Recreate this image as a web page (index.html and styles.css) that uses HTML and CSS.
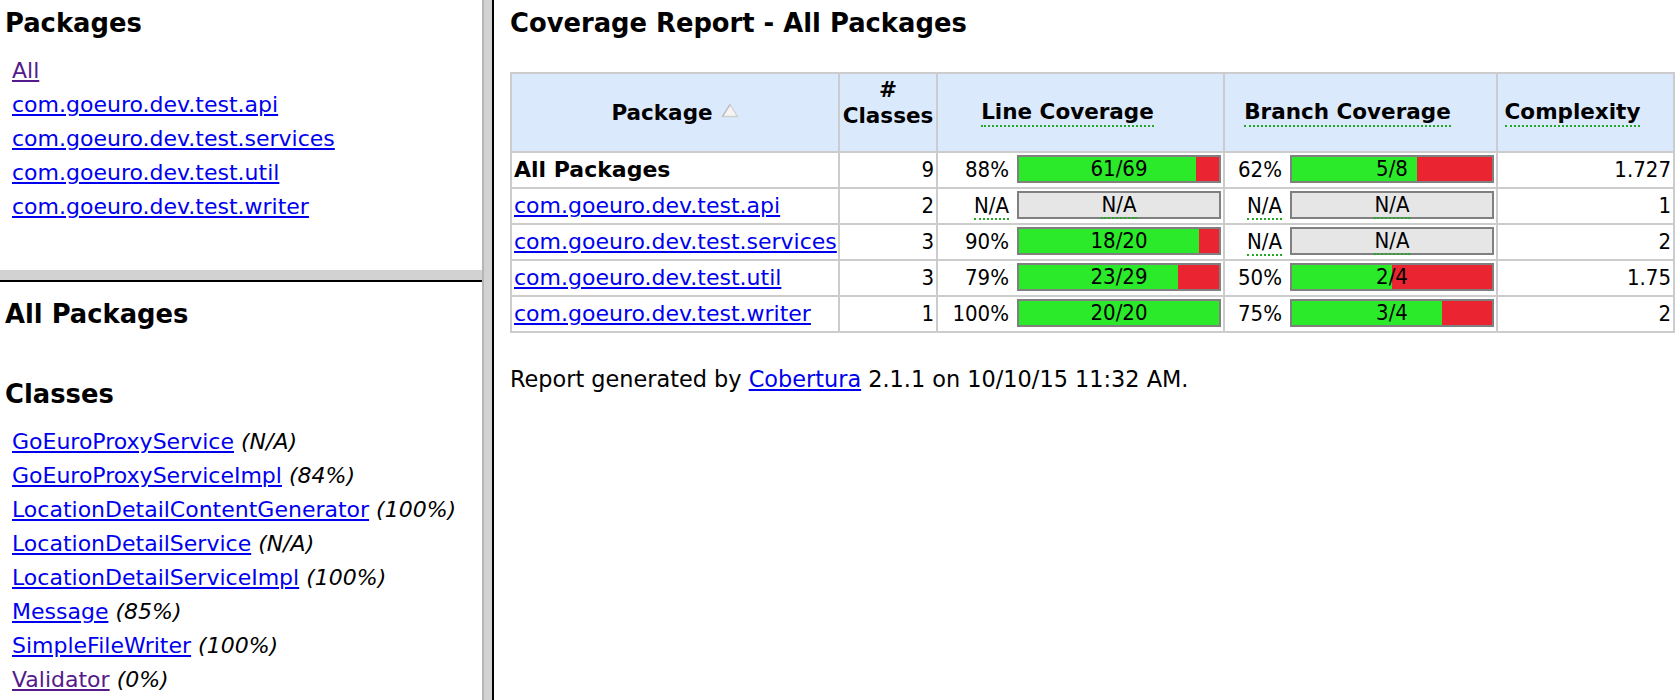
FILE: index.html
```html
<!DOCTYPE html>
<html lang="en">
<head>
<meta charset="utf-8">
<title>Coverage Report - All Packages</title>
<link rel="stylesheet" href="styles.css">
</head>
<body>
<div class="frames">
  <aside class="nav">
    <section class="nav-top">
      <h2 class="nav-title">Packages</h2>
      <ul class="nav-list">
        <li><a class="visited" href="#">All</a></li>
        <li><a href="#">com.goeuro.dev.test.api</a></li>
        <li><a href="#">com.goeuro.dev.test.services</a></li>
        <li><a href="#">com.goeuro.dev.test.util</a></li>
        <li><a href="#">com.goeuro.dev.test.writer</a></li>
      </ul>
    </section>
    <div class="hsplit"></div>
    <section class="nav-bottom">
      <h2 class="nav-title">All Packages</h2>
      <h2 class="nav-title classes-title">Classes</h2>
      <ul class="nav-list">
        <li><a href="#">GoEuroProxyService</a> <i>(N/A)</i></li>
        <li><a href="#">GoEuroProxyServiceImpl</a> <i>(84%)</i></li>
        <li><a href="#">LocationDetailContentGenerator</a> <i>(100%)</i></li>
        <li><a href="#">LocationDetailService</a> <i>(N/A)</i></li>
        <li><a href="#">LocationDetailServiceImpl</a> <i>(100%)</i></li>
        <li><a href="#">Message</a> <i>(85%)</i></li>
        <li><a href="#">SimpleFileWriter</a> <i>(100%)</i></li>
        <li><a class="visited" href="#">Validator</a> <i>(0%)</i></li>
      </ul>
    </section>
  </aside>
  <div class="vsplit"></div>
  <main class="main">
    <h1 class="page-title">Coverage Report - All Packages</h1>
    <table class="report">
      <colgroup>
        <col class="c-pkg"><col class="c-cls"><col class="c-line"><col class="c-branch"><col class="c-cx">
      </colgroup>
      <thead>
        <tr>
          <th><div class="th-in"><span>Package</span><svg class="sort" width="18" height="15" viewBox="0 0 18 15"><path d="M9 1.5 L16.5 13.5 L1.5 13.5 Z" fill="#f4f4f4" stroke="#cfcfcf" stroke-width="1.3"/><path d="M9 1.5 L1.5 13.5" stroke="#b9b9b9" stroke-width="1.3"/></svg></div></th>
          <th><div class="th-in th-stack"><span>#</span><span>Classes</span></div></th>
          <th><div class="th-in"><span class="hint">Line Coverage</span><svg class="sort off" width="18" height="15"></svg></div></th>
          <th><div class="th-in"><span class="hint">Branch Coverage</span><svg class="sort off" width="18" height="15"></svg></div></th>
          <th><div class="th-in"><span class="hint">Complexity</span><svg class="sort off" width="18" height="15"></svg></div></th>
        </tr>
      </thead>
      <tbody>
        <tr>
          <td class="pkg"><b>All Packages</b></td>
          <td class="num">9</td>
          <td><div class="cov"><span class="pct">88%</span><div class="bar" style="--g:88.4%">61/69</div></div></td>
          <td><div class="cov"><span class="pct">62%</span><div class="bar" style="--g:62.5%">5/8</div></div></td>
          <td class="num">1.727</td>
        </tr>
        <tr>
          <td class="pkg"><a href="#">com.goeuro.dev.test.api</a></td>
          <td class="num">2</td>
          <td><div class="cov"><span class="pct"><span class="hint-na">N/A</span></span><div class="bar bar-na"><span class="hint-na">N/A</span></div></div></td>
          <td><div class="cov"><span class="pct"><span class="hint-na">N/A</span></span><div class="bar bar-na"><span class="hint-na">N/A</span></div></div></td>
          <td class="num">1</td>
        </tr>
        <tr>
          <td class="pkg"><a href="#">com.goeuro.dev.test.services</a></td>
          <td class="num">3</td>
          <td><div class="cov"><span class="pct">90%</span><div class="bar" style="--g:90%">18/20</div></div></td>
          <td><div class="cov"><span class="pct"><span class="hint-na">N/A</span></span><div class="bar bar-na"><span class="hint-na">N/A</span></div></div></td>
          <td class="num">2</td>
        </tr>
        <tr>
          <td class="pkg"><a href="#">com.goeuro.dev.test.util</a></td>
          <td class="num">3</td>
          <td><div class="cov"><span class="pct">79%</span><div class="bar" style="--g:79.3%">23/29</div></div></td>
          <td><div class="cov"><span class="pct">50%</span><div class="bar" style="--g:50%">2/4</div></div></td>
          <td class="num">1.75</td>
        </tr>
        <tr>
          <td class="pkg"><a href="#">com.goeuro.dev.test.writer</a></td>
          <td class="num">1</td>
          <td><div class="cov"><span class="pct">100%</span><div class="bar" style="--g:100%">20/20</div></div></td>
          <td><div class="cov"><span class="pct">75%</span><div class="bar" style="--g:75%">3/4</div></div></td>
          <td class="num">2</td>
        </tr>
      </tbody>
    </table>
    <p class="footer">Report generated by <a href="#">Cobertura</a> 2.1.1 on 10/10/15 11:32 AM.</p>
  </main>
</div>
</body>
</html>
```

FILE: styles.css
```css
html, body {
  margin: 0;
  padding: 0;
  background: #ffffff;
}

body {
  font-family: "DejaVu Sans", Verdana, sans-serif;
  color: #000000;
  width: 1680px;
  height: 700px;
  overflow: hidden;
}

a {
  color: #0000ee;
  text-decoration: underline;
}

a.visited {
  color: #551a8b;
}

.frames {
  display: flex;
  height: 700px;
}

/* ---------- left frames ---------- */
.nav {
  width: 482px;
  flex: none;
  display: flex;
  flex-direction: column;
}

.nav-top {
  height: 270px;
  box-sizing: border-box;
  padding: 8px 0 0 5px;
  overflow: hidden;
}

.hsplit {
  height: 10px;
  box-sizing: content-box;
  background: #d2d2d2;
  border-bottom: 2px solid #000000;
  flex: none;
}

.nav-bottom {
  flex: 1;
  padding: 17px 0 0 5px;
  overflow: hidden;
}

.nav-title {
  margin: 0;
  font-size: 25.8px;
  line-height: 30px;
  font-weight: bold;
}

.classes-title {
  margin-top: 50px;
}

.nav-list {
  list-style: none;
  margin: 16px 0 0 0;
  padding: 0 0 0 7px;
  font-size: 22px;
  line-height: 34px;
  white-space: nowrap;
}

.nav-list i {
  font-style: italic;
}

.vsplit {
  flex: none;
  width: 8px;
  background: #d2d2d2;
  border-left: 2px solid #b6b6b6;
  border-right: 2px solid #000000;
}

/* ---------- main frame ---------- */
.main {
  flex: 1;
  padding: 8px 0 0 16px;
  overflow: hidden;
}

.page-title {
  margin: 0 0 34px 0;
  font-size: 25.8px;
  line-height: 30px;
  font-weight: bold;
}

.report {
  border-collapse: collapse;
  table-layout: fixed;
  width: 1165px;
}

.c-pkg { width: 328px; }
.c-cls { width: 98px; }
.c-line { width: 287px; }
.c-branch { width: 273px; }
.c-cx { width: 177px; }

.report th,
.report td {
  border: 2px solid #cccccc;
  padding: 2px;
}

.report th {
  background: #dbe9fc;
  font-size: 21.5px;
  font-weight: bold;
  line-height: 27px;
}

.th-in {
  height: 73px;
  display: flex;
  align-items: center;
  justify-content: center;
}

.th-stack {
  flex-direction: column;
  line-height: 26px;
  padding-bottom: 20px;
  box-sizing: border-box;
}

.sort {
  flex: none;
  margin-left: 8px;
  margin-bottom: 5px;
}

.sort.off {
  visibility: hidden;
}

.hint {
  border-bottom: 2px dotted #22a822;
}

.report td {
  font-size: 22px;
  line-height: 30px;
  white-space: nowrap;
  overflow: hidden;
}

.report td.pkg b {
  font-size: 22px;
}

.report td.num {
  text-align: right;
  font-family: "DejaVu Sans Condensed", "DejaVu Sans", sans-serif;
  font-stretch: condensed;
}

.cov {
  display: flex;
  align-items: flex-start;
  height: 30px;
  font-family: "DejaVu Sans Condensed", "DejaVu Sans", sans-serif;
  font-stretch: condensed;
}

.pct {
  flex: 1;
  text-align: right;
  padding-right: 8px;
}

.bar {
  flex: none;
  width: 200px;
  height: 24px;
  border: 2px solid #808080;
  line-height: 24px;
  text-align: center;
  background: linear-gradient(90deg, #2aea2a 0, #2aea2a var(--g), #ea2430 var(--g), #ea2430 100%);
}

.bar-na {
  background: #e6e6e6;
}

.hint-na {
  border-bottom: 2px dotted #22a822;
}

.footer {
  margin: 33px 0 0 0;
  font-size: 22.4px;
  line-height: 27px;
}
```
